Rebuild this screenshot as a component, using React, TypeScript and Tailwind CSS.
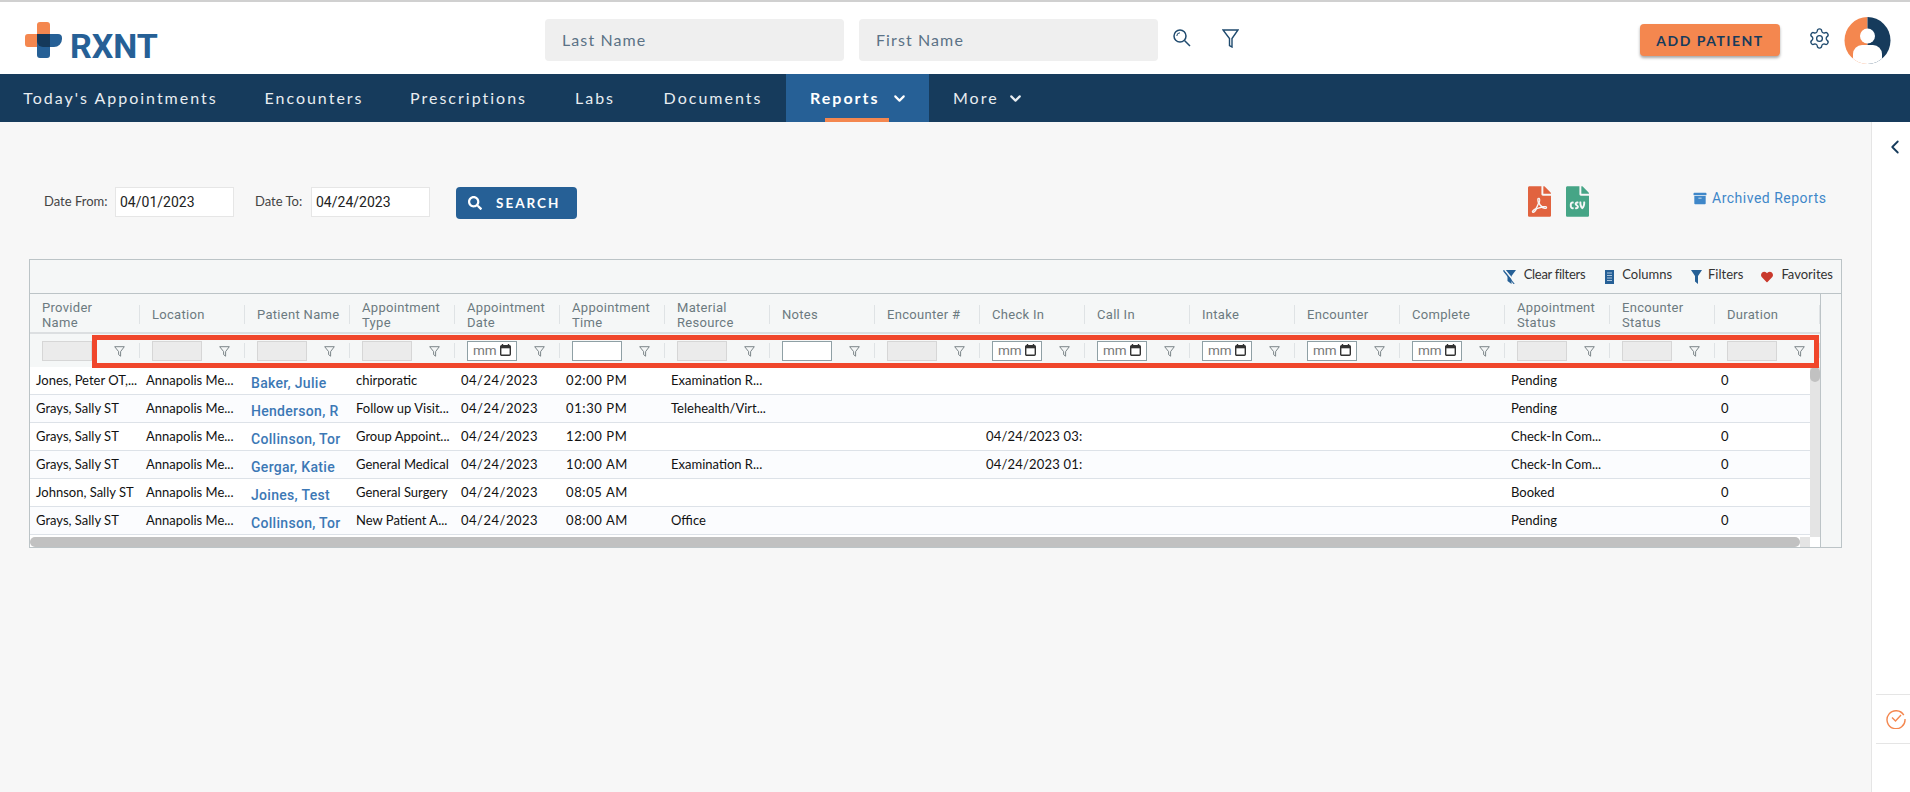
import { Settings, ChevronDown, ChevronLeft } from 'lucide-react'
import { FaFilePdf, FaFileCsv, FaArchive, FaSearch, FaHeart } from 'react-icons/fa'

const muli = "font-['Lato','Noto_Sans',sans-serif]"

const navItems = [
  { label: "Today's Appointments", width: 'w-[241px]' },
  { label: 'Encounters', width: 'w-[146px]' },
  { label: 'Prescriptions', width: 'w-[163px]' },
  { label: 'Labs', width: 'w-[90px]' },
  { label: 'Documents', width: 'w-[146px]' },
]

type Filter = 'off' | 'date' | 'blank'

const columns: { title: string[]; filter: Filter }[] = [
  { title: ['Provider', 'Name'], filter: 'off' },
  { title: ['Location'], filter: 'off' },
  { title: ['Patient Name'], filter: 'off' },
  { title: ['Appointment', 'Type'], filter: 'off' },
  { title: ['Appointment', 'Date'], filter: 'date' },
  { title: ['Appointment', 'Time'], filter: 'blank' },
  { title: ['Material', 'Resource'], filter: 'off' },
  { title: ['Notes'], filter: 'blank' },
  { title: ['Encounter #'], filter: 'off' },
  { title: ['Check In'], filter: 'date' },
  { title: ['Call In'], filter: 'date' },
  { title: ['Intake'], filter: 'date' },
  { title: ['Encounter'], filter: 'date' },
  { title: ['Complete'], filter: 'date' },
  { title: ['Appointment', 'Status'], filter: 'off' },
  { title: ['Encounter', 'Status'], filter: 'off' },
  { title: ['Duration'], filter: 'off' },
]

const rows = [
  ['Jones, Peter OT,...', 'Baker, Julie', 'chirporatic', '02:00 PM', 'Examination R...', '', 'Pending'],
  ['Grays, Sally ST', 'Henderson, R', 'Follow up Visit...', '01:30 PM', 'Telehealth/Virt...', '', 'Pending'],
  ['Grays, Sally ST', 'Collinson, Tor', 'Group Appoint...', '12:00 PM', '', '04/24/2023 03:', 'Check-In Com...'],
  ['Grays, Sally ST', 'Gergar, Katie', 'General Medical', '10:00 AM', 'Examination R...', '04/24/2023 01:', 'Check-In Com...'],
  ['Johnson, Sally ST', 'Joines, Test', 'General Surgery', '08:05 AM', '', '', 'Booked'],
  ['Grays, Sally ST', 'Collinson, Tor', 'New Patient A...', '08:00 AM', 'Office', '', 'Pending'],
]

const gridCols = 'grid grid-cols-[110px_repeat(16,105px)]'

function Logo() {
  return (
    <div className="flex items-end">
      <svg width="37" height="36" viewBox="0 0 37 36">
        <path d="M12 3a3 3 0 0 1 3-3h7a3 3 0 0 1 3 3V25H3a3 3 0 0 1-3-3V15a3 3 0 0 1 3-3H12Z" fill="#f4874f" />
        <path d="M12 12H33a4 4 0 0 1 4 4v1a8 8 0 0 1-8 8H25V33a3 3 0 0 1-3 3H15a3 3 0 0 1-3-3Z" fill="#266096" />
        <path d="M12 12H25V25H18a6 6 0 0 1-6-6Z" fill="#15395a" />
      </svg>
      <span className="ml-[8px] h-[24px] font-['Roboto',sans-serif] text-[34px] font-bold leading-[24px] text-[#266096]">RXNT</span>
    </div>
  )
}

function FunnelSmall() {
  return (
    <svg width="11" height="11" viewBox="0 0 11 11" fill="none" stroke="#6f797d" strokeWidth="0.9" className="shrink-0">
      <path d="M0.7 0.7H10.3L6.6 5.6V10.2L4.6 8.6V5.6Z" />
    </svg>
  )
}

function FilterCell({ filter }: { filter: Filter }) {
  return (
    <div className="relative flex h-[33px] items-center pl-[12px]">
      {filter === 'off' && <div className="h-[20px] w-[50px] border border-[#d6d6d6] bg-[#ebebeb]" />}
      {filter === 'blank' && <div className="h-[20px] w-[50px] border border-[#8fa0a5] bg-white" />}
      {filter === 'date' && (
        <div className="flex h-[20px] w-[50px] items-center border border-[#8fa0a5] bg-white pl-[5px] font-['Roboto',sans-serif] text-[13.5px] text-[#777777]">
          <span className="leading-none">mm</span>
          <svg width="11" height="12" viewBox="0 0 11 12" className="ml-[3px] -mt-[2px]">
            <path d="M2.5 0v1.5M8.5 0v1.5" stroke="#333" strokeWidth="1.4" />
            <rect x="0.7" y="1.7" width="9.6" height="9.6" rx="1" fill="none" stroke="#333" strokeWidth="1.4" />
            <rect x="0.7" y="1.7" width="9.6" height="2.6" fill="#333" />
          </svg>
        </div>
      )}
      <div className="absolute right-[15px] top-[12px]">
        <FunnelSmall />
      </div>
      <div className="absolute right-0 top-[9px] h-[15px] w-px bg-[#dfe3e5]" />
    </div>
  )
}

export default function App() {
  return (
    <div className={`flex h-screen w-full flex-col overflow-hidden bg-[#f7f7f7] ${muli}`}>
      <header className="flex h-[74px] items-center border-t-2 border-[#d0d0d0] bg-white pt-[4px]">
        <div className="ml-[25px] w-[520px]">
          <Logo />
        </div>
        <div className="flex h-[42px] w-[299px] items-center rounded-[4px] bg-[#efefef] px-[17px] text-[16px] tracking-[1.1px] text-[#5b7286]">Last Name</div>
        <div className="ml-[15px] flex h-[42px] w-[299px] items-center rounded-[4px] bg-[#efefef] px-[17px] text-[16px] tracking-[1.1px] text-[#5b7286]">First Name</div>
        <svg width="18" height="18" viewBox="0 0 18 18" fill="none" stroke="#1f4a6e" strokeWidth="1.5" className="ml-[15px] -mt-[5px]">
          <circle cx="7" cy="7" r="6" />
          <path d="M11.5 11.5L17 17" />
          <path d="M3.8 7a3.2 3.2 0 0 1 3.2-3.2" strokeWidth="1" />
        </svg>
        <svg width="17" height="19" viewBox="0 0 17 19" fill="none" stroke="#1f4a6e" strokeWidth="1.4" className="ml-[31px] -mt-[4px]">
          <path d="M1 1H16L10 9.5V18L7.5 16.5V9.5Z" />
        </svg>
        <button className="ml-[401px] h-[32px] w-[140px] rounded-[4px] bg-[#f4874f] text-[14px] font-bold tracking-[1.5px] text-[#163b5c] shadow-[0_2px_3px_rgba(0,0,0,0.35)]">
          ADD PATIENT
        </button>
        <Settings className="ml-[28px] -mt-[4px] h-[23px] w-[23px] text-[#1f4a6e]" strokeWidth={1.4} />
        <svg width="47" height="47" viewBox="0 0 47 47" className="ml-[13px]">
          <defs>
            <clipPath id="avatar">
              <ellipse cx="23.5" cy="23.5" rx="23" ry="23.5" />
            </clipPath>
          </defs>
          <g clipPath="url(#avatar)">
            <rect width="23.5" height="47" fill="#f4874f" />
            <rect x="23.5" width="23.5" height="47" fill="#163b5c" />
            <circle cx="23.5" cy="19" r="7.5" fill="#ffffff" />
            <rect x="9" y="28" width="29" height="24" rx="9" fill="#ffffff" />
          </g>
        </svg>
      </header>

      <nav className="flex h-[48px] items-stretch bg-[#163b5c] text-[16px] tracking-[2px] text-[#e8edf1]">
        {navItems.map((item) => (
          <a key={item.label} className={`flex items-center justify-center ${item.width}`}>
            {item.label}
          </a>
        ))}
        <a className="relative flex w-[143px] items-center gap-[11px] bg-[#266096] pl-[24px] font-bold text-white">
          Reports
          <ChevronDown className="h-[17px] w-[17px]" strokeWidth={3} />
          <span className="absolute bottom-0 left-[39px] h-[4px] w-[64px] bg-[#f4874f]" />
        </a>
        <a className="flex items-center gap-[8px] pl-[24px]">
          More
          <ChevronDown className="h-[17px] w-[17px]" strokeWidth={3} />
        </a>
      </nav>

      <div className="flex flex-1">
        <main className="flex-1">
          <div className="flex h-[137px] items-start pl-[44px] pt-[65px]">
            <label className="flex h-[30px] w-[71px] items-center text-[13px] text-[#444444]">Date From:</label>
            <div className="flex h-[30px] w-[119px] items-center border border-[#e6e6e6] bg-white pl-[4px] font-['Roboto',sans-serif] text-[14px] text-[#222222]">04/01/2023</div>
            <label className="ml-[21px] flex h-[30px] w-[56px] items-center text-[13px] text-[#444444]">Date To:</label>
            <div className="flex h-[30px] w-[119px] items-center border border-[#e6e6e6] bg-white pl-[4px] font-['Roboto',sans-serif] text-[14px] text-[#222222]">04/24/2023</div>
            <button className="ml-[26px] flex h-[32px] w-[121px] items-center rounded-[4px] bg-[#266096] pl-[12px] text-[13.5px] font-bold tracking-[2px] text-white">
              <FaSearch className="h-[14px] w-[14px]" />
              <span className="ml-[14px]">SEARCH</span>
            </button>
            <FaFilePdf className="ml-[951px] -mt-px h-[31px] w-[23px] text-[#e1633f]" />
            <FaFileCsv className="ml-[15px] -mt-px h-[31px] w-[23px] text-[#46a586]" />
            <div className="ml-[104px] -mt-px flex h-[24px] items-center font-['Roboto',sans-serif] text-[14px] tracking-[0.5px] text-[#3f87c9]">
              <FaArchive className="mr-[5px] h-[13px] w-[14px] text-[#3f87c9]" />
              Archived Reports
            </div>
          </div>

          <section className="ml-[29px] w-[1813px] border border-[#bcc4c7] bg-[#f5f7f7] text-[13px]">
            <div className="flex h-[34px] items-center justify-end border-b border-[#bcc4c7] pb-[4px] pr-[8px] text-[#333333]">
              <svg width="13" height="14" viewBox="0 0 13 14" className="mt-[5px]">
                <path d="M0 0H13L8.5 6V14L4.5 11V6Z" fill="#266096" />
                <path d="M1.8 0L12.6 13" stroke="#f5f7f7" strokeWidth="1.6" />
                <path d="M0.6 1L11.2 14" stroke="#266096" strokeWidth="1.1" />
              </svg>
              <span className="ml-[8px] tracking-[-0.3px]">Clear filters</span>
              <svg width="9" height="14" viewBox="0 0 9 14" className="ml-[20px] mt-[5px]">
                <rect width="9" height="14" fill="#266096" />
                <path d="M2 3H7M2 5.5H7M2 8H7M2 10.5H7" stroke="#cfe0ee" strokeWidth="0.8" />
              </svg>
              <span className="ml-[8px]">Columns</span>
              <svg width="11" height="14" viewBox="0 0 11 14" className="ml-[19px] mt-[5px]">
                <path d="M0 0H11L7 6V14L4 11.5V6Z" fill="#266096" />
              </svg>
              <span className="ml-[6px]">Filters</span>
              <FaHeart className="ml-[18px] mt-[5px] h-[12px] w-[12px] text-[#c9392c]" />
              <span className="ml-[8px]">Favorites</span>
            </div>
            <div className="flex">
              <div className="w-[1791px] border-r border-[#bcc4c7]">
                <div className={`${gridCols} h-[40px] border-b-2 border-[#dcdfe1] font-['Roboto',sans-serif] text-[13px] leading-[15px] tracking-[0.3px] text-[#6c7a80]`}>
                  {columns.map((col) => (
                    <div key={col.title.join(' ')} className="relative flex flex-col justify-center pl-[12px] pt-[3px]">
                      {col.title.map((line) => (
                        <span key={line}>{line}</span>
                      ))}
                      <span className="absolute right-0 top-[11px] h-[19px] w-px bg-[#dfe3e5]" />
                    </div>
                  ))}
                </div>
                <div className={gridCols}>
                  {columns.map((col) => (
                    <FilterCell key={col.title.join(' ')} filter={col.filter} />
                  ))}
                </div>
                <div className="relative flex bg-white">
                  <div className="h-[170px] w-[1780px] overflow-hidden">
                    {rows.map((row, i) => (
                      <div key={i} className={`${gridCols} h-[28px] items-center border-b border-[#dde2e8] text-[13px] text-[#111111] ${i % 2 === 1 ? 'bg-[#fbfcfe]' : 'bg-white'}`}>
                        <div className="overflow-hidden whitespace-nowrap pl-[6px]">{row[0]}</div>
                        <div className="overflow-hidden whitespace-nowrap pl-[6px]">Annapolis Me...</div>
                        <div className="mt-[5px] overflow-hidden whitespace-nowrap pl-[6px] font-['Roboto',sans-serif] text-[14px] font-medium tracking-[0.3px] text-[#3c78b5]">{row[1]}</div>
                        <div className="overflow-hidden whitespace-nowrap pl-[6px]">{row[2]}</div>
                        <div className="overflow-hidden whitespace-nowrap pl-[6px] tracking-[0.5px]">04/24/2023</div>
                        <div className="overflow-hidden whitespace-nowrap pl-[6px] tracking-[0.6px]">{row[3]}</div>
                        <div className="overflow-hidden whitespace-nowrap pl-[6px]">{row[4]}</div>
                        <div />
                        <div />
                        <div className="overflow-hidden whitespace-nowrap pl-[6px] tracking-[0.2px]">{row[5]}</div>
                        <div />
                        <div />
                        <div />
                        <div />
                        <div className="overflow-hidden whitespace-nowrap pl-[6px]">{row[6]}</div>
                        <div />
                        <div className="pl-[6px]">0</div>
                      </div>
                    ))}
                  </div>
                  <div className="w-[10px] bg-[#e4e4e4]">
                    <div className="h-[15px] rounded-[5px] bg-[#c1c1c1]" />
                  </div>
                </div>
                <div className="flex h-[10px] bg-white">
                  <div className="h-[10px] w-[1770px] rounded-[5px] bg-[#c1c1c1]" />
                  <div className="h-[10px] w-[10px] bg-[#e4e4e4]" />
                </div>
              </div>
            </div>
          </section>
        </main>

        <aside className="relative w-[39px] border-l border-[#e5e5e5] bg-white">
          <ChevronLeft className="absolute left-[12px] top-[14px] h-[22px] w-[22px] text-[#163b5c]" strokeWidth={2} />
          <div className="absolute left-[4px] right-0 top-[572px] flex h-[50px] items-center border-y border-[#e5e5e5] pl-[10px]">
            <svg width="20" height="20" viewBox="0 0 20 20" fill="none" stroke="#f4874f" strokeWidth="1.4">
              <path d="M17.8 6.2A9 9 0 1 0 19 10" />
              <path d="M6 8.5L9.5 12L15 6" />
            </svg>
          </div>
        </aside>
      </div>

      <div className="pointer-events-none absolute left-[92px] top-[335px] h-[33px] w-[1727px] border-[5px] border-[#f0462b]" />
    </div>
  )
}
